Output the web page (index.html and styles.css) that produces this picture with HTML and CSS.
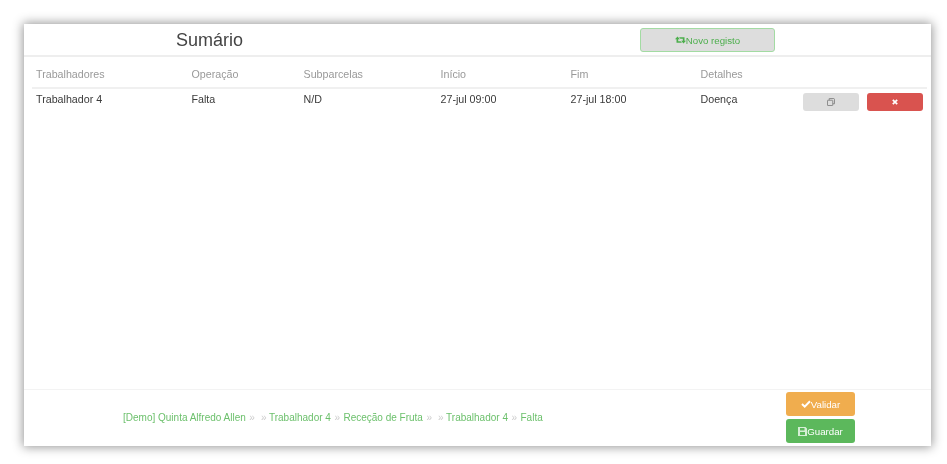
FILE: index.html
```html
<!DOCTYPE html>
<html lang="pt">
<head>
<meta charset="utf-8">
<title>Sumário</title>
<link rel="stylesheet" href="styles.css">
</head>
<body>
<main class="card">
  <header class="top">
    <h1 class="title">Sumário</h1>
    <button class="btn btn-new">
      <svg class="ico" width="11" height="8" viewBox="0 0 11 8"><path d="M2.5 0.5 L0 3.2 H1.5 V6.8 H7 L5.6 5.2 H3.2 V3.2 H4.9 Z M8.5 7.5 L11 4.8 H9.5 V1.2 H4 L5.4 2.8 H7.8 V4.8 H6.1 Z" fill="#4cae4c"/></svg>Novo registo
    </button>
  </header>
  <section class="content">
    <div class="grid head">
      <span>Trabalhadores</span><span>Operação</span><span>Subparcelas</span><span>Início</span><span>Fim</span><span>Detalhes</span>
    </div>
    <div class="grid row">
      <span>Trabalhador 4</span><span>Falta</span><span>N/D</span><span>27-jul 09:00</span><span>27-jul 18:00</span><span>Doença</span>
      <div class="actions">
        <button class="btn btn-copy" aria-label="Copiar">
          <svg width="8" height="8" viewBox="0 0 9 9" fill="none" stroke="#888" stroke-width="1.1"><path d="M2.5 2.5 V0.5 H7 Q8.5 0.5 8.5 2 V6.5 H6.5"/><rect x="0.5" y="2.5" width="6" height="6" rx="0.5"/></svg>
        </button>
        <button class="btn btn-del" aria-label="Apagar">
          <svg width="6" height="6" viewBox="0 0 6 6"><path d="M0.8 0.8 L5.2 5.2 M5.2 0.8 L0.8 5.2" stroke="#fff" stroke-width="1.7"/></svg>
        </button>
      </div>
    </div>
  </section>
  <footer class="bottom">
    <nav class="crumbs">
      <a>[Demo] Quinta Alfredo Allen</a><i>»</i><i class="gap">»</i><a>Trabalhador 4</a><i>»</i><a>Receção de Fruta</a><i>»</i><i class="gap">»</i><a>Trabalhador 4</a><i>»</i><a>Falta</a>
    </nav>
    <div class="stack">
      <button class="btn btn-ok">
        <svg width="10" height="8" viewBox="0 0 10 8"><path d="M1 4 L3.7 6.6 L9 1.2" fill="none" stroke="#fff" stroke-width="2"/></svg>Validar
      </button>
      <button class="btn btn-save">
        <svg width="9" height="9" viewBox="0 0 9 9"><path d="M0 0 H7.5 L9 1.5 V9 H0 Z M2 1 V3.5 H6.5 V1 Z M2 5 V8 H7 V5 Z" fill="#d5eed5" fill-rule="evenodd"/></svg>Guardar
      </button>
    </div>
  </footer>
</main>
</body>
</html>
```
FILE: styles.css
```css
* { box-sizing: border-box; }
html, body { margin: 0; height: 100%; background: #fff; }
body {
  padding: 24px 16px 18px 24px;
  font-family: "Liberation Sans", Arial, sans-serif;
  font-size: 10.7px;
  color: #3a3a3a;
}
.card {
  height: 422px;
  display: flex;
  flex-direction: column;
  background: #fff;
  box-shadow: 0 0 10px 1px rgba(0, 0, 0, 0.42);
  filter: blur(0.35px);
}
.top {
  height: 33px;
  flex: none;
  display: flex;
  align-items: flex-start;
  border-bottom: 2px solid #eee;
  padding-left: 152px;
}
.title {
  margin: 4px 0 0;
  width: 464px;
  font-size: 18px;
  line-height: 24px;
  font-weight: 400;
  color: #444;
}
.btn {
  display: inline-flex;
  align-items: center;
  justify-content: center;
  padding: 0;
  font: inherit;
  font-size: 9.7px;
  border: 1px solid transparent;
  border-radius: 3px;
}
.btn-new {
  margin-top: 4px;
  width: 135px;
  height: 24px;
  background: #ddd;
  border-color: #a3dba3;
  color: #4cae4c;
}
.content { flex: 1; padding: 0 4px 0 8px; }
.grid {
  display: grid;
  grid-template-columns: 155.5px 112px 137px 130px 130px 102px 1fr;
  padding-left: 4px;
}
.head {
  height: 32px;
  padding-top: 10px;
  line-height: 14px;
  color: #999;
  border-bottom: 2px solid #f0f0f0;
}
.row { padding-top: 4px; line-height: 12px; }
.actions { display: flex; gap: 8px; }
.btn-copy { width: 56px; height: 18px; background: #ddd; }
.btn-del { width: 56px; height: 18px; background: #d9534f; }
.bottom {
  height: 57px;
  flex: none;
  display: flex;
  border-top: 1px solid #f3f3f3;
  padding-left: 99px;
}
.crumbs {
  width: 663px;
  padding-top: 22px;
  font-size: 10px;
  line-height: 12px;
  color: #6cc06c;
  white-space: nowrap;
}
.crumbs i { font-style: normal; color: #ccc; margin: 0 3.5px; }
.crumbs i.gap { margin: 0 2.5px; }
.stack { display: flex; flex-direction: column; gap: 3px; padding-top: 2px; }
.stack .btn { width: 69px; height: 24px; color: #fff; }
.btn-ok { background: #f0ad4e; }
.btn-save { background: #5cb85c; }
```
